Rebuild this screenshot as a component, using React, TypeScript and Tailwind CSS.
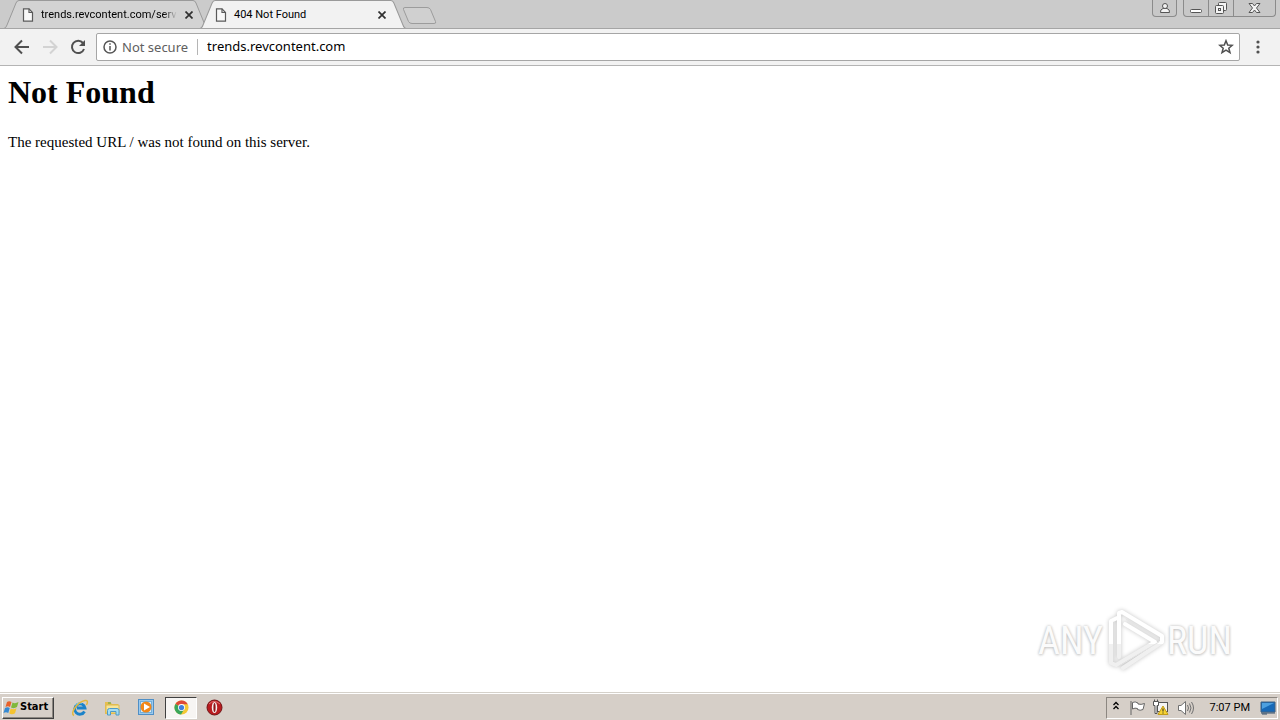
import type { ReactNode } from "react";

const uiFont = "font-['Noto_Sans','Open_Sans',sans-serif]";

function PageIcon() {
  return (
    <svg width="12" height="14" viewBox="0 0 12 14" fill="#f8f8f8" stroke="#5a5a5a" strokeWidth="1.2" className="shrink-0">
      <path d="M1.5 .8H7L10.5 4.5V13.2H1.5Z" />
      <path d="M7 .8V4.5H10.5" fill="none" />
    </svg>
  );
}

function CloseIcon() {
  return (
    <svg width="8" height="8" viewBox="0 0 8 8" stroke="#303030" strokeWidth="1.7">
      <path d="M.5 .5 7.5 7.5M7.5 .5 .5 7.5" />
    </svg>
  );
}

function Tab({ title, active = false }: { title: string; active?: boolean }) {
  return (
    <div className={active ? "relative z-10 -ml-2 h-7 w-[206px]" : "relative h-7 w-[204px]"}>
      <svg className="absolute inset-0 h-full w-full" viewBox="0 0 204 28" preserveAspectRatio="none">
        <path
          d="M0 28.500Q2 28 3 25L12 3Q13 .5 15 .5H189Q191 .5 192 3L201 25Q202 28 204 28.500"
          fill={active ? "#f2f2f2" : "#d3d3d3"}
          stroke="#9a9a9a"
        />
      </svg>
      <div className={active ? "relative flex h-full items-center pt-px pr-5 pl-[15px]" : "relative flex h-full items-center pt-px pr-[15px] pl-[18px]"}>
        <PageIcon />
        <a
          href="#page"
          className={
            active
              ? "ml-[7px] min-w-0 flex-1 font-['Roboto',sans-serif] text-[11px] leading-4 whitespace-nowrap text-black"
              : "ml-[7px] min-w-0 flex-1 mask-r-from-90% font-['Roboto',sans-serif] text-[11px] leading-4 whitespace-nowrap text-black"
          }
        >
          {title}
        </a>
        <button aria-label="Close tab" className="ml-2">
          <CloseIcon />
        </button>
      </div>
    </div>
  );
}

function WindowButton({ label, className, children }: { label: string; className: string; children: ReactNode }) {
  return (
    <button aria-label={label} className={`flex h-full items-center justify-center ${className}`}>
      {children}
    </button>
  );
}

function TabStrip() {
  return (
    <header className="flex h-7 shrink-0 items-start bg-[#cbcbcb] pl-1">
      <div className="flex">
        <Tab title="trends.revcontent.com/serv" />
        <Tab title="404 Not Found" active />
      </div>
      <button aria-label="New tab" className="-ml-1 pt-1.5">
        <svg width="36" height="19" viewBox="0 0 36 19">
          <path d="M3 1.500H25Q27.500 1.500 28.500 3.500L33.500 15.500Q34.500 17.500 32 17.500H10Q7.500 17.500 6.500 15.500L1.500 3.500Q.8 1.500 3 1.500Z" fill="#d0d0d0" stroke="#9c9c9c" />
        </svg>
      </button>
      <div className="ml-auto flex h-[17px] gap-1.5 pr-1">
        <div className="w-[25px] rounded-b border border-t-0 border-[#8b8b8b] bg-[#c8c8c8]">
          <WindowButton label="Profile" className="w-full">
            <svg width="12" height="12" viewBox="0 0 12 12" fill="#f4f4f4" stroke="#555">
              <path d="M1.500 10.500Q1 7.500 4 6.500H8Q11 7.500 10.500 10.500Z" />
              <circle cx="6" cy="4" r="2.500" />
            </svg>
          </WindowButton>
        </div>
        <div className="flex w-[93px] rounded-b border border-t-0 border-[#8b8b8b] bg-[#c8c8c8]">
          <WindowButton label="Minimize" className="w-[25px] border-r border-[#8b8b8b]">
            <svg width="12" height="14" viewBox="0 0 12 14" fill="#fff" stroke="#555">
              <rect x=".5" y="8.500" width="11" height="3" rx="1" />
            </svg>
          </WindowButton>
          <WindowButton label="Restore" className="w-[25px] border-r border-[#8b8b8b]">
            <svg width="14" height="14" viewBox="0 0 14 14" fill="#f4f4f4" stroke="#555">
              <rect x="4.500" y="1.500" width="8" height="8" rx="1" />
              <rect x="1.500" y="4.500" width="8" height="8" rx="1" />
              <rect x="4.500" y="7.500" width="2" height="2" />
            </svg>
          </WindowButton>
          <WindowButton label="Close" className="flex-1">
            <svg width="13" height="12" viewBox="0 0 13 12" fill="#f4f4f4" stroke="#555">
              <path d="M1 1.500H4.500L6.500 4 8.500 1.500H12L8.500 6 12 10.500H8.500L6.500 8 4.500 10.500H1L4.500 6Z" />
            </svg>
          </WindowButton>
        </div>
      </div>
    </header>
  );
}

function Toolbar() {
  return (
    <nav className="flex h-[38px] shrink-0 items-center border-t border-b border-t-[#a5a5a5] border-b-[#b4b4b4] bg-[#f2f2f2] pl-3">
      <div className="flex gap-2">
        <button aria-label="Back">
          <svg width="20" height="20" viewBox="0 0 20 20" fill="none" stroke="#505050" strokeWidth="2">
            <path d="M17 10H4M10 3.500 3.500 10 10 16.500" />
          </svg>
        </button>
        <button aria-label="Forward" disabled>
          <svg width="20" height="20" viewBox="0 0 20 20" fill="none" stroke="#d3d3d3" strokeWidth="2">
            <path d="M3 10H16M10 3.500 16.500 10 10 16.500" />
          </svg>
        </button>
        <button aria-label="Reload">
          <svg width="20" height="20" viewBox="0 0 20 20" fill="none" stroke="#505050" strokeWidth="2">
            <path d="M15 6A6.200 6.200 0 1 0 16 12" />
            <path d="M17 3V9H11Z" fill="#505050" stroke="none" />
          </svg>
        </button>
      </div>
      <div className="ml-2 flex h-7 flex-1 items-center rounded-xs border border-[#a6a6a6] bg-white pr-[5px] pl-1.5">
        <svg width="14" height="14" viewBox="0 0 14 14" fill="none" stroke="#555" strokeWidth="1.500">
          <circle cx="7" cy="7" r="6" />
          <path d="M7 6V10.500M7 3.300V4.800" />
        </svg>
        <label htmlFor="address" className="ml-[5px] border-r border-[#b5b5b5] pr-[9px] text-[13px] leading-4 text-[#606060]">
          Not secure
        </label>
        <input id="address" defaultValue="trends.revcontent.com" className="ml-[9px] min-w-0 flex-1 text-[13px] text-black outline-none" />
        <button aria-label="Bookmark this page">
          <svg width="16" height="16" viewBox="0 0 16 16" fill="none" stroke="#505050" strokeWidth="1.500">
            <path d="M8 1.700 9.700 6 14.300 6.300 10.800 9.200 12 13.700 8 11.200 4 13.700 5.200 9.200 1.700 6.300 6.300 6Z" />
          </svg>
        </button>
      </div>
      <button aria-label="Menu" className="flex w-10 justify-center pr-1">
        <svg width="4" height="14" viewBox="0 0 4 14" fill="#505050">
          <circle cx="2" cy="2" r="1.600" />
          <circle cx="2" cy="7" r="1.600" />
          <circle cx="2" cy="12" r="1.600" />
        </svg>
      </button>
    </nav>
  );
}

function Watermark() {
  return (
    <div className="absolute right-12 bottom-[18px] flex items-center font-['Roboto_Condensed','Liberation_Sans_Narrow',sans-serif] text-[38px] leading-none text-[#fbfbfb] [text-shadow:0_0_3px_#bdbdbd,0_1px_3px_#cfcfcf]">
      <span>ANY</span>
      <svg width="64" height="66" viewBox="0 0 64 66" fill="none" strokeLinejoin="round" strokeLinecap="round" className="drop-shadow-[0_0_2px_#c4c4c4]">
        <defs>
          <linearGradient id="sheen" gradientUnits="userSpaceOnUse" x1="0" y1="0" x2="0" y2="66">
            <stop offset=".54" stopColor="#fff" />
            <stop offset=".54" stopColor="#f0f0f0" />
          </linearGradient>
        </defs>
        <g stroke="url(#sheen)" strokeWidth="4">
          <path d="M14 10 8 13V55L13 57 52 34 22 16" />
          <path d="M16 49V5L19 4 59 28V34L20 60" />
        </g>
        <path d="M11 14V53M23 11 56 31M16 58 56 34" stroke="#e4e4e4" />
      </svg>
      <span>RUN</span>
    </div>
  );
}

function Taskbar() {
  return (
    <footer className="flex h-7 shrink-0 items-center border-t border-[#d5d1ca] bg-[#d6cfc8] pt-0.5 pr-0.5 pl-0.5 shadow-[inset_0_1px_0_#fff]">
      <button className="flex h-[22px] w-[52px] items-center border border-t-white border-r-[#404040] border-b-[#404040] border-l-white bg-[#d6cfc8] font-['DejaVu_Sans_Condensed','DejaVu_Sans',sans-serif] text-[11px] font-bold shadow-[inset_-1px_-1px_0_#8c8781]">
        <svg width="17" height="16" viewBox="0 0 17 16">
          <path d="M4 2Q6 .5 8.500 2L7 7Q5 5.500 2.500 7Z" fill="#e8612a" />
          <path d="M9.500 2.500Q12 4 15.500 2L14 7Q11 9 8 7.500Z" fill="#80b83b" />
          <path d="M2 8Q4.500 6.500 6.700 8L5.300 13Q3 11.500.5 13Z" fill="#3589d3" />
          <path d="M7.700 8.500Q10.500 10 13.500 8.300L12 13.300Q9 15 6.300 13.500Z" fill="#f5c330" />
        </svg>
        Start
      </button>
      <div className="ml-3 flex items-center">
        <button aria-label="Internet Explorer" className="flex w-[33px] justify-center pr-1.5">
          <svg width="18" height="18" viewBox="0 0 18 18" fill="none">
            <path d="M13.500 12.500A5.200 5.200 0 1 1 14 9H6" stroke="#1b83c9" strokeWidth="2.800" />
            <path d="M4 6Q7 3 11 4" stroke="#74d2f5" />
            <path d="M3 16.500C-1.500 15 6 3 14 1.500Q18 1 15.500 6" stroke="#e3b83d" strokeWidth="1.500" />
          </svg>
        </button>
        <button aria-label="File Explorer" className="flex w-[33px] justify-center pr-1.5">
          <svg width="17" height="16" viewBox="0 0 17 16">
            <path d="M1 2H6L8 4H14V14H1Z" fill="#e6be50" />
            <path d="M2 5H15V13H2Z" fill="#f7e599" stroke="#ddb950" />
            <path d="M3.500 15V10.500Q3.500 8.500 5.500 8.500H13Q15 8.500 15 10.500V15H12V11.500H6.500V15Z" fill="#a4dcf2" stroke="#4d9bc8" />
            <path d="M4 3H7" stroke="#5da543" />
          </svg>
        </button>
        <button aria-label="Media Player" className="flex w-[33px] justify-center pr-1">
          <svg width="17" height="17" viewBox="0 0 17 17">
            <rect x=".5" y=".5" width="15" height="15" fill="#9bc9ed" stroke="#4f8fc6" />
            <rect x="2.500" y="2.500" width="11" height="11" fill="#d6ecfb" stroke="#72afdb" />
            <circle cx="8" cy="8" r="5.500" fill="#f28718" />
            <path d="M6 4.500 12 8 6 11.500Z" fill="#fff" />
          </svg>
        </button>
        <button aria-label="Chrome" className="flex h-[22px] w-8 items-center justify-center border border-t-[#404040] border-r-white border-b-white border-l-[#404040] bg-[#f7f5f3]">
          <svg width="15" height="15" viewBox="0 0 16 16">
            <circle cx="8" cy="8" r="7.500" fill="#f4c834" />
            <path d="M8 8 1.500 4.200A7.500 7.500 0 0 1 14.700 4.500H8Z" fill="#df4937" />
            <path d="M8 8 1.500 4.200A7.500 7.500 0 0 0 7.500 15.500L11 9.500Z" fill="#3aa65a" />
            <circle cx="8" cy="8" r="3.700" fill="#fff" />
            <circle cx="8" cy="8" r="2.800" fill="#427fdb" />
          </svg>
        </button>
        <button aria-label="Opera" className="ml-[9px]">
          <svg width="17" height="17" viewBox="0 0 17 17">
            <circle cx="8.500" cy="8.500" r="7.500" fill="#b91c20" stroke="#701416" />
            <path d="M3 5Q8 0 14 5" stroke="#e47172" fill="none" />
            <ellipse cx="8.500" cy="8.500" rx="2.700" ry="5.500" fill="#f5eeee" />
            <ellipse cx="8.500" cy="8.500" rx="1.100" ry="4.500" fill="#8f1518" />
          </svg>
        </button>
      </div>
      <div className="ml-auto flex h-[22px] items-center border border-t-[#8c8781] border-r-white border-b-white border-l-[#8c8781] pr-px pl-1.5">
        <button aria-label="Show hidden icons" className="pb-1">
          <svg width="6" height="10" viewBox="0 0 6 10" fill="none" stroke="#000" strokeWidth="1.300">
            <path d="M.5 4 3 1.500 5.500 4M.5 8 3 5.500 5.500 8" />
          </svg>
        </button>
        <button aria-label="Action Center" className="ml-2.5">
          <svg width="17" height="16" viewBox="0 0 17 16" fill="#fff" stroke="#656565">
            <path d="M2 1V15" />
            <path d="M3.500 2.500Q6 1 9 3V4Q12 5 15.500 3.500L14 9.500Q11 11 8.500 9.500V8.500Q6 7.500 3.500 9Z" />
          </svg>
        </button>
        <button aria-label="Network" className="ml-1.5">
          <svg width="17" height="17" viewBox="0 0 17 17" fill="#f5f5f5" stroke="#555">
            <rect x="5.500" y="3.500" width="10" height="9" />
            <path d="M1.500 2.500H6.500V6.500H5V14.500H3V6.500H1.500ZM2.500 .5V2.500M5.500 .5V2.500" fill="#fff" />
            <path d="M11 7 16 15.500H6Z" fill="#f6d333" stroke="#c39c18" />
            <path d="M11 9.500V12.500M11 13.500V14.500" stroke="#222" />
          </svg>
        </button>
        <button aria-label="Volume" className="ml-2">
          <svg width="18" height="16" viewBox="0 0 18 16" fill="none" stroke="#707070">
            <path d="M1.500 5.500H4L8.500 1.500V14.500L4 10.500H1.500Z" fill="#fff" />
            <path d="M10.500 5Q12.500 8 10.500 11M12.500 3.500Q15.500 8 12.500 12.500M14.500 2Q18.500 8 14.500 14" />
          </svg>
        </button>
        <time className="ml-[15px] font-['Roboto',sans-serif] text-[11px] leading-4 text-black">7:07 PM</time>
        <button aria-label="Show desktop" className="ml-2.5">
          <svg width="16" height="14" viewBox="0 0 16 14">
            <path d="M1 1H15V11H1Z" fill="#1769b7" stroke="#3e6284" />
            <path d="M2 2H14L2 8Z" fill="#4da0df" />
            <path d="M1 12H15M2 13H7" stroke="#35506a" />
          </svg>
        </button>
      </div>
    </footer>
  );
}

export default function App() {
  return (
    <div className={`flex h-screen flex-col overflow-hidden bg-white ${uiFont}`}>
      <TabStrip />
      <Toolbar />
      <main id="page" className="relative flex-1 px-2 pt-2 font-['Liberation_Serif',serif] text-black">
        <h1 className="text-[32px] leading-9 font-bold">Not Found</h1>
        <p className="mt-6 text-[15px] leading-4">The requested URL / was not found on this server.</p>
        <Watermark />
      </main>
      <Taskbar />
    </div>
  );
}
